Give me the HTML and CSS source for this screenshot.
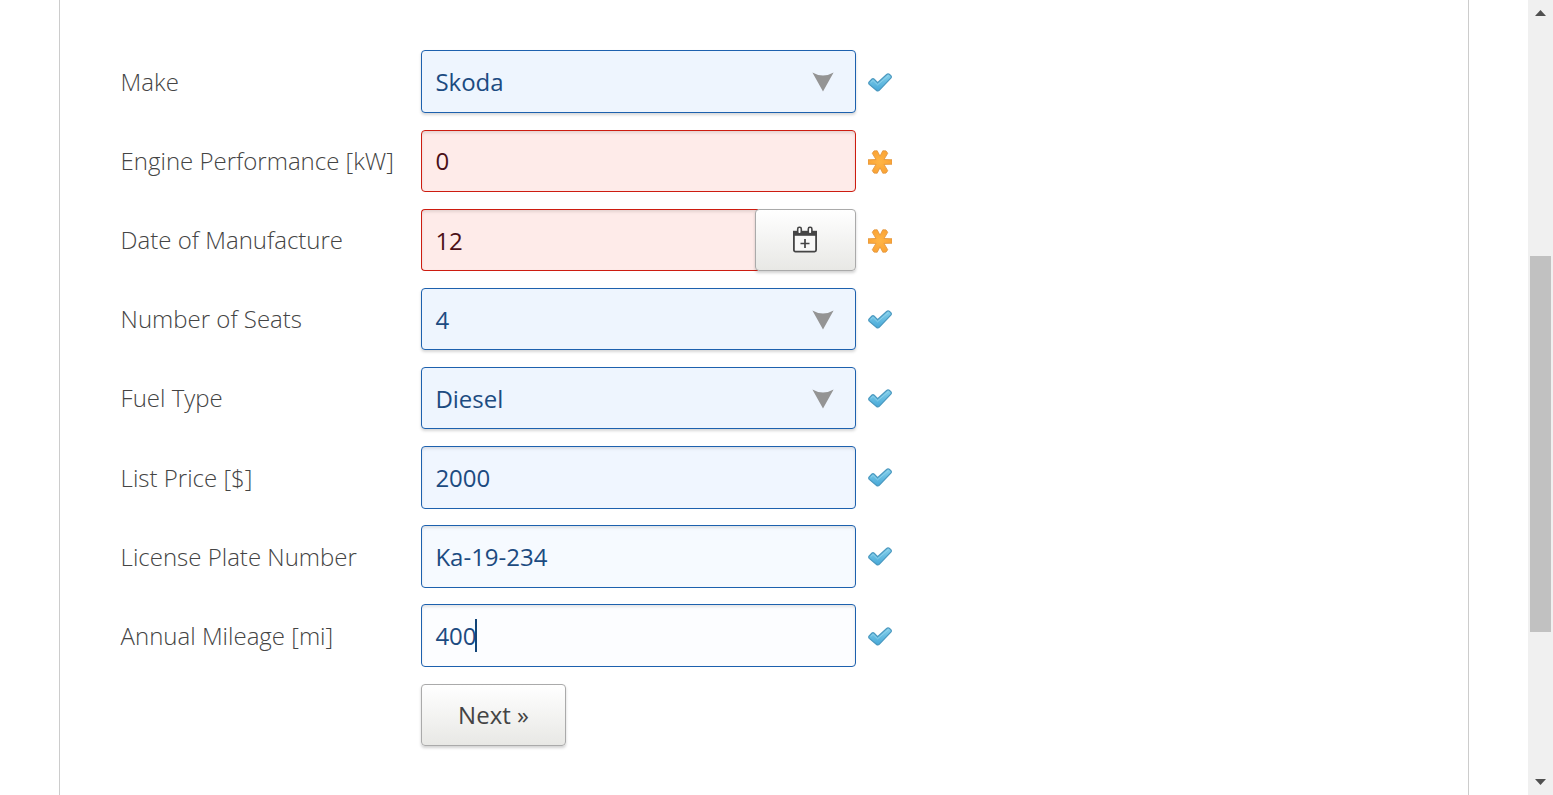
FILE: index.html
```html
<!DOCTYPE html>
<html lang="en">
<head>
<meta charset="utf-8">
<title>Vehicle Data</title>
<link rel="stylesheet" href="styles.css">
</head>
<body>
<svg class="defs" width="0" height="0">
  <defs>
    <linearGradient id="blue" x1="0" y1="0" x2="0" y2="1"><stop offset="0" stop-color="#86d0ea"/><stop offset="1" stop-color="#46a8d8"/></linearGradient>
    <radialGradient id="orange"><stop offset="0" stop-color="#ffb545"/><stop offset="1" stop-color="#fba435"/></radialGradient>
    <symbol id="check" viewBox="0 0 24 24"><path d="M1.2 10.8 4 8Q5.1 7.2 6.2 8.2L9.6 11.7 18.4 3.7Q19.8 2.4 21.3 3.2L22.8 4.6Q23.9 5.9 22.8 7.2L11.4 19.2Q9.9 20.7 8.3 19.3L1.3 13.4Q.2 12 1.2 10.8Z" fill="url(#blue)" stroke="#4a98bf" stroke-width="1.2"/><path d="M2.7 11.5 5 9.4l4.5 4.4L20.4 4.6" fill="none" stroke="#94d6ed" stroke-width=".8"/></symbol>
    <symbol id="star" viewBox="0 0 24 24"><path d="M4.3 3.3 6 .9 9.2 .8 12 6.2 14.8 .8 18 .9 19.7 3.3 16 9.5 24 9.8V14.2L16 14.4 19.7 20.7 18 23.1 14.8 23.2 12 17.8 9.2 23.2 6 23.1 4.3 20.7 8 14.4 0 14.2V9.8L8 9.5Z" fill="url(#orange)" stroke="#e3973f" stroke-width=".9" stroke-linejoin="round"/></symbol>
    <symbol id="arrow" viewBox="0 0 22 20"><path d="M.4.4Q11 6.6 21.6.4L11 19.4Z" fill="#949494"/></symbol>
  </defs>
</svg>
<div class="window">
  <main class="panel">
    <form class="form">
      <div class="row"><label class="label">Make</label><div class="field select"><span>Skoda</span><svg class="arrow"><use href="#arrow"/></svg></div><svg class="status"><use href="#check"/></svg></div>
      <div class="row"><label class="label">Engine Performance [kW]</label><div class="field invalid"><span>0</span></div><svg class="status"><use href="#star"/></svg></div>
      <div class="row"><label class="label">Date of Manufacture</label><div class="combo"><div class="field invalid date"><span>12</span></div><div class="button picker"><svg class="calendar" viewBox="0 0 26 28"><rect x="1.9" y="6" width="22.2" height="19.6" rx="1.5" fill="#f9f9f8" stroke="#454545" stroke-width="1.8"/><path d="M1 4.8h24v5H1z" fill="#454545"/><rect x="5.7" y="1.3" width="3.6" height="6.5" rx="1.6" fill="#fff" stroke="#454545" stroke-width="1.6"/><rect x="16.3" y="1.3" width="3.6" height="6.5" rx="1.6" fill="#fff" stroke="#454545" stroke-width="1.6"/><path d="M13 13v9M8.5 17.5h9" stroke="#454545" stroke-width="1.7"/></svg></div></div><svg class="status"><use href="#star"/></svg></div>
      <div class="row"><label class="label">Number of Seats</label><div class="field select"><span>4</span><svg class="arrow"><use href="#arrow"/></svg></div><svg class="status"><use href="#check"/></svg></div>
      <div class="row"><label class="label">Fuel Type</label><div class="field select"><span>Diesel</span><svg class="arrow"><use href="#arrow"/></svg></div><svg class="status"><use href="#check"/></svg></div>
      <div class="row"><label class="label">List Price [$]</label><div class="field"><span>2000</span></div><svg class="status"><use href="#check"/></svg></div>
      <div class="row"><label class="label">License Plate Number</label><div class="field fading"><span>Ka-19-234</span></div><svg class="status"><use href="#check"/></svg></div>
      <div class="row"><label class="label">Annual Mileage [mi]</label><div class="field active"><span>400</span><i class="caret"></i></div><svg class="status"><use href="#check"/></svg></div>
      <div class="row"><div class="button next">Next »</div></div>
    </form>
  </main>
  <aside class="scrollbar">
    <svg width="11" height="6" viewBox="0 0 11 6"><path d="M0 6 5.5 0 11 6Z" fill="#505050"/></svg>
    <div class="thumb"></div>
    <svg class="down" width="11" height="6" viewBox="0 0 11 6"><path d="M0 0h11L5.5 6Z" fill="#505050"/></svg>
  </aside>
</div>
</body>
</html>
```
FILE: styles.css
```css
* { box-sizing: border-box; }
body { margin: 0; background: #fff; font-family: "Open Sans", "Noto Sans", sans-serif; font-size: 24px; overflow: hidden; }
.defs { display: block; }
.window { display: flex; justify-content: space-between; height: 795px; }
.panel { width: 1410px; margin-left: 59px; border: solid #ccc; border-width: 0 1px; padding: 50.4px 0 0 61px; }
.form { display: grid; grid-auto-rows: 62.5px; row-gap: 16.65px; }
.row { display: grid; grid-template-columns: 300px 435px 24px; align-items: center; }
.label { font-weight: 300; color: #444; line-height: 33px; white-space: nowrap; margin-left: -.4px; padding-bottom: .5px; }
.field { height: 62.5px; display: flex; align-items: center; padding: .3px 13px 0 13.4px; border: 1px solid #1d61ae; border-radius: 4px; background: #f0f6ff; color: #1c4b81; line-height: 33px; box-shadow: inset 0 2px 3px rgba(0, 0, 0, .1); }
.select { justify-content: space-between; padding-right: 21px; background: #eef5fe; box-shadow: 0 2px 3px rgba(0, 0, 0, .16); }
.invalid { border-color: #cd1c10; background: #feebe9; color: #4b1018; }
.fading { background: #f6faff; }
.active { background: #fcfdff; }
.arrow { width: 22px; height: 20px; margin-top: 1px; }
.status { width: 24px; height: 24px; margin: 2px 0 0 12px; }
.combo { display: flex; }
.date { width: 337px; border-right: 0; border-radius: 4px 0 0 4px; }
.button { height: 62.5px; display: flex; align-items: center; justify-content: center; border: 1px solid #aaa; border-radius: 4px; background: linear-gradient(#fff, #e8e8e5); color: #444; box-shadow: 0 2px 3px rgba(0, 0, 0, .18); }
.picker { width: 101px; margin-left: -3px; padding-right: 2px; }
.calendar { width: 26px; height: 28px; }
.next { grid-column: 2; width: 145px; }
.caret { width: 2px; height: 33px; margin-left: -2px; background: #124578; }
.scrollbar { width: 25px; display: flex; flex-direction: column; align-items: center; padding: 10px 0; background: #f0f0f0; }
.thumb { width: 21px; height: 376px; margin-top: 240px; background: #c1c1c1; }
.down { margin-top: auto; }
```
